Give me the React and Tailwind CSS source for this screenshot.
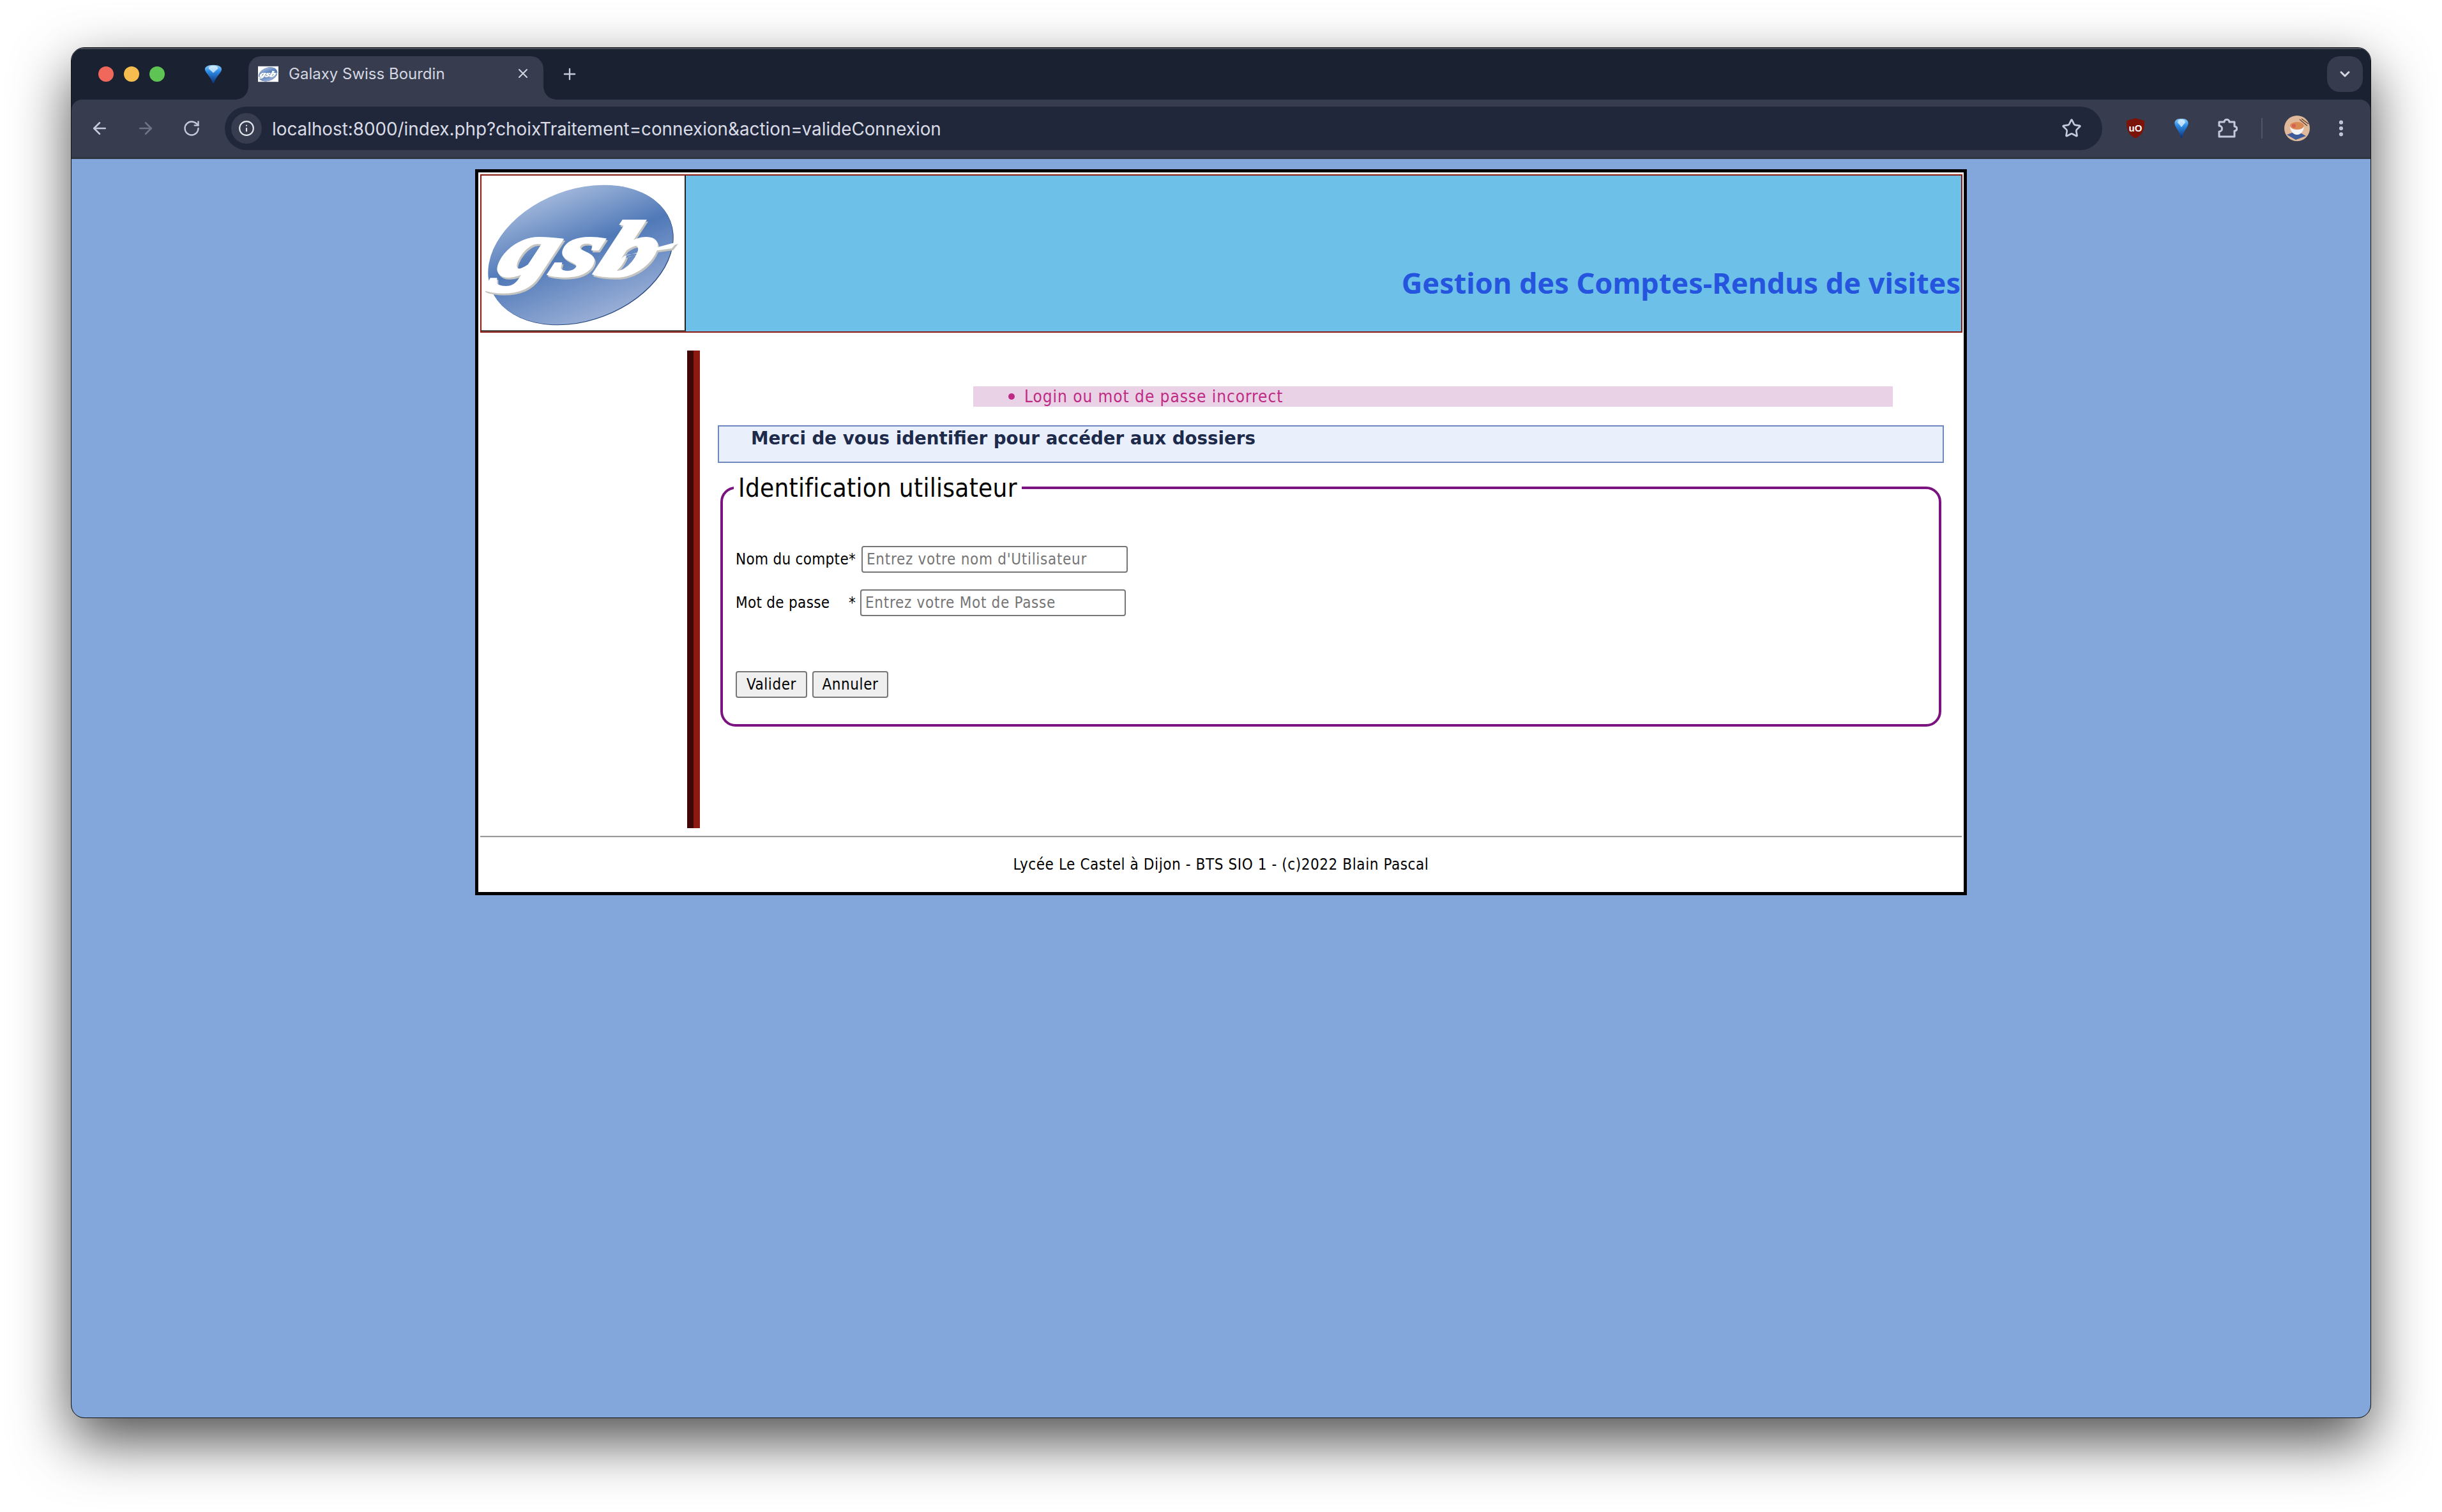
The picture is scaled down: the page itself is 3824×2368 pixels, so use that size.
import React from 'react';
import { ArrowLeft, ArrowRight, ChevronDown, Info, MoreVertical, Plus, RotateCw, Star, X } from 'lucide-react';

function GsbLogo({ className }) {
  return (
    <svg viewBox="0 0 318 242" className={className}>
      <defs>
        <linearGradient id="gsbFill" x1="0" y1="0" x2="0" y2="1">
          <stop offset="0" stopColor="#9db4d9" />
          <stop offset="0.45" stopColor="#5079b8" />
          <stop offset="1" stopColor="#98aed6" />
        </linearGradient>
        <filter id="gsbShadow" x="-10%" y="-10%" width="120%" height="130%">
          <feDropShadow dx="2" dy="3" stdDeviation="0.6" floodColor="#c4c4c0" />
        </filter>
      </defs>
      <rect width="318" height="242" fill="#fff" />
      <ellipse cx="156" cy="125" rx="150" ry="102" transform="rotate(-21 156 125)" fill="#2b4a80" />
      <ellipse cx="155" cy="124" rx="150" ry="102" transform="rotate(-21 155 124)" fill="url(#gsbFill)" />
      <g filter="url(#gsbShadow)" fill="#fff">
        <text
          x="0"
          y="0"
          transform="translate(20 156) skewX(-22) scale(1.42 1)"
          fontFamily="Liberation Serif, serif"
          fontWeight="700"
          fontStyle="italic"
          fontSize="122"
          stroke="#fff"
          strokeWidth="5"
        >
          gsb
        </text>
        <path d="M224 126 L306 104 L298 114 L228 124 C222 140 214 150 200 156 L196 146 Z" />
      </g>
    </svg>
  );
}

function Drop({ className }) {
  return (
    <svg viewBox="0 0 28 54" className={className}>
      <defs>
        <linearGradient id="dropFill" x1="0" y1="0" x2="0" y2="1">
          <stop offset="0" stopColor="#8fd0fb" />
          <stop offset="0.35" stopColor="#2f8de8" />
          <stop offset="1" stopColor="#0a2f78" />
        </linearGradient>
      </defs>
      <path d="M14 1 C23 1 28 7 27 15 C26 24 18 34 15 53 L13 53 C10 34 2 24 1 15 C0 7 5 1 14 1 Z" fill="url(#dropFill)" />
      <path d="M14 3 C19 3 22 7 21 12 L14 24 L7 12 C6 7 9 3 14 3 Z" fill="#e6f4ff" opacity="0.75" />
    </svg>
  );
}

function UblockIcon() {
  return (
    <svg viewBox="0 0 30 32" className="w-[30px] h-[32px]">
      <path d="M15 0 L29 4 C30 16 27 26 15 32 C3 26 0 16 1 4 Z" fill="#7a1408" />
      <text x="15" y="21" textAnchor="middle" fontFamily="Liberation Sans, sans-serif" fontWeight="700" fontSize="15" fill="#fff">
        uO
      </text>
    </svg>
  );
}

function ExtensionIcon() {
  return (
    <svg viewBox="0 0 32 32" className="w-[32px] h-[32px]" fill="none" stroke="#c5c9dc" strokeWidth="3" strokeLinejoin="round">
      <path d="M3 6 H11 C11 1 19 1 19 6 H27 V13 C32 13 32 20 27 20 V29 H3 V21 C9 21 9 12 3 12 Z" />
    </svg>
  );
}

function Avatar() {
  return (
    <svg viewBox="0 0 40 40" className="w-[40px] h-[40px] rounded-full">
      <rect width="40" height="40" fill="#dfb99a" />
      <path d="M4 30 L20 24 L34 32 L18 38 Z" fill="#3d5a9a" />
      <path d="M9 16 H31 C31 24 26 30 20 30 C14 30 9 24 9 16 Z" fill="#f4f4f6" />
      <ellipse cx="20" cy="16" rx="11" ry="6" fill="#d98a52" />
      <circle cx="15" cy="16" r="3" fill="#d85f55" />
      <path d="M24 6 L36 16 M27 5 L38 13" stroke="#5a3b2a" strokeWidth="1.2" />
    </svg>
  );
}

function TabStrip() {
  return (
    <div className="h-[81px] flex pt-[11px] pl-[42px] pr-[12px] border-t-2 border-t-[#4a4f5c] relative">
      <div className="flex items-center gap-[16px] h-[56px]">
        <div className="w-[24px] h-[24px] rounded-full bg-[#f0675c]" />
        <div className="w-[24px] h-[24px] rounded-full bg-[#f5bd4f]" />
        <div className="w-[24px] h-[24px] rounded-full bg-[#5ec454]" />
      </div>
      <div className="w-[131px] h-[56px] flex items-center justify-center pl-[34px] pr-[13px]">
        <Drop className="w-[28px] h-[54px] scale-y-[0.55]" />
      </div>
      <div className="relative w-[462px] h-[68px] bg-[#373d4e] rounded-t-[20px] flex items-start pt-[12px] pl-[15px]">
        <div className="absolute left-[-20px] bottom-0 w-[20px] h-[20px] bg-[radial-gradient(circle_at_0_0,#1a2131_19.5px,#373d4e_20px)]" />
        <div className="absolute right-[-20px] bottom-0 w-[20px] h-[20px] bg-[radial-gradient(circle_at_100%_0,#1a2131_19.5px,#373d4e_20px)]" />
        <GsbLogo className="w-[32px] h-[32px]" />
        <span className="ml-[16px] font-['Inter',sans-serif] text-[24px] leading-[32px] text-[#d4d7e2]">Galaxy Swiss Bourdin</span>
        <X className="absolute right-[20px] top-[15px] text-[#d4d7e2]" size={24} strokeWidth={2} />
      </div>
      <div className="w-[82px] h-[56px] flex items-center justify-center">
        <Plus className="text-[#c5c9dc]" size={28} strokeWidth={2} />
      </div>
      <div className="flex-1" />
      <div className="w-[56px] h-[56px] rounded-[20px] bg-[#363c4d] flex items-center justify-center">
        <ChevronDown className="text-[#d4d7e2]" size={24} strokeWidth={3} />
      </div>
    </div>
  );
}

function ToolBar() {
  return (
    <div className="h-[93px] bg-[#373d4e] rounded-t-[16px] flex items-center border-b-[3px] border-b-[#30343f] relative">
      <div className="w-[8px]" />
      <div className="w-[72px] flex justify-center"><ArrowLeft className="text-[#c5c9dc]" size={30} strokeWidth={2} /></div>
      <div className="w-[72px] flex justify-center"><ArrowRight className="text-[#6f7485]" size={30} strokeWidth={2} /></div>
      <div className="w-[72px] flex justify-center"><RotateCw className="text-[#c5c9dc]" size={28} strokeWidth={2} /></div>
      <div className="ml-[16px] w-[2940px] h-[68px] rounded-full bg-[#20273a] flex items-center pl-[10px] pr-[32px]">
        <div className="w-[48px] h-[48px] rounded-full bg-[#373d4e] flex items-center justify-center">
          <Info className="text-[#e4e6ee]" size={26} strokeWidth={2} />
        </div>
        <span className="ml-[16px] pt-[3px] font-['Inter',sans-serif] text-[27.8px] text-[#d9dce6]">
          localhost:8000/index.php?choixTraitement=connexion&amp;action=valideConnexion
        </span>
        <div className="flex-1" />
        <Star className="text-[#c5c9dc]" size={32} strokeWidth={2} />
      </div>
      <div className="ml-[36px] w-[32px] flex justify-center"><UblockIcon /></div>
      <div className="ml-[40px] w-[32px] flex justify-center"><Drop className="w-[26px] h-[44px] scale-y-[0.72]" /></div>
      <div className="ml-[40px] w-[32px] flex justify-center"><ExtensionIcon /></div>
      <div className="ml-[37px] w-[2px] h-[32px] bg-[#50566a]" />
      <div className="ml-[34px]"><Avatar /></div>
      <MoreVertical className="ml-[33px] text-[#c5c9dc]" size={32} strokeWidth={2.6} />
    </div>
  );
}

function LoginForm() {
  return (
    <fieldset className="ml-[32px] w-[1912px] border-[4px] border-[#7a1380] rounded-[24px] mt-[16px] h-[397px]">
      <legend className="ml-[17px] px-[7px] text-[40px] leading-[46px] tracking-[0.3px] text-black">Identification utilisateur</legend>
      <div className="pl-[20px]">
        <div className="mt-[68px] flex items-center h-[42px] text-[24px] tracking-[0.3px]">
          <label className="w-[197px]">Nom du compte*</label>
          <input
            placeholder="Entrez votre nom d'Utilisateur"
            className="w-[417px] h-[42px] border-2 border-[#767676] rounded-[4px] px-[6px] text-[24px] tracking-[0.7px] placeholder:text-[#757575]"
          />
        </div>
        <div className="mt-[26px] flex items-center h-[42px] text-[24px] tracking-[0.3px]">
          <label className="w-[195px] flex justify-between pr-[7px]">
            <span>Mot de passe</span>
            <span>*</span>
          </label>
          <input
            placeholder="Entrez votre Mot de Passe"
            className="w-[416px] h-[42px] border-2 border-[#767676] rounded-[4px] px-[6px] text-[24px] tracking-[0.7px] placeholder:text-[#757575]"
          />
        </div>
        <div className="mt-[86px] flex gap-[8px] tracking-[0.6px]">
          <button className="w-[112px] h-[42px] bg-[#efefef] border-2 border-[#767676] rounded-[4px] text-[24px]">Valider</button>
          <button className="w-[119px] h-[42px] bg-[#efefef] border-2 border-[#767676] rounded-[4px] text-[24px]">Annuler</button>
        </div>
      </div>
    </fieldset>
  );
}

function Page() {
  return (
    <div className="flex-1 bg-[#83a7db] pt-[16px] font-['DejaVu_Sans_Condensed','DejaVu_Sans',sans-serif] text-black">
      <div className="ml-[632px] w-[2336px] h-[1137px] border-[5px] border-black bg-white pt-[3px]">
        <div className="mx-[3px] w-[2321px] h-[248px] border-2 border-[#8b1a10] flex">
          <div className="w-[320px] h-[244px] border-r-2 border-r-[#222] border-b-2 border-b-[#555] bg-white">
            <GsbLogo className="w-[318px] h-[242px]" />
          </div>
          <div className="flex-1 bg-[#6dc0e8] flex items-end justify-end pr-[1px] pb-[44px]">
            <h1 className="font-['Noto_Sans',sans-serif] font-bold text-[45px] leading-[64px] text-[#2554de]">
              Gestion des Comptes-Rendus de visites
            </h1>
          </div>
        </div>
        <div className="flex mt-[28px] h-[748px]">
          <div className="w-[327px]" />
          <div className="w-[20px] flex">
            <div className="w-[10px] bg-[#3e0604]" />
            <div className="w-[10px] bg-[#8b1a10]" />
          </div>
          <div className="flex-1">
            <div className="ml-[428px] mt-[56px] w-[1440px] h-[32px] bg-[#e9d2e5] text-[#bf2a84] text-[26px] leading-[32px] tracking-[0.95px] pl-[55px] flex items-center">
              <span className="w-[10px] h-[10px] rounded-full bg-[#bf2a84]" />
              <span className="ml-[15px]">Login ou mot de passe incorrect</span>
            </div>
            <div className="ml-[28px] mt-[29px] w-[1920px] h-[59px] bg-[#e9effb] border-2 border-[#6f89c0] pl-[50px] pt-[2px] font-['DejaVu_Sans',sans-serif] font-bold text-[27.7px] leading-[34px] text-[#1d2a4a]">
              Merci de vous identifier pour accéder aux dossiers
            </div>
            <LoginForm />
          </div>
        </div>
        <div className="mt-[12px] mx-[3px] h-[3px] bg-[#999] border-b border-b-[#eee]" />
        <p className="mt-[28px] text-center text-[24px] leading-[28px] tracking-[0.58px]">Lycée Le Castel à Dijon - BTS SIO 1 - (c)2022 Blain Pascal</p>
      </div>
    </div>
  );
}

export default function App() {
  return (
    <div className="w-[3824px] h-[2368px] bg-white pt-[75px] pl-[112px] overflow-hidden">
      <div className="w-[3600px] h-[2145px] rounded-[20px] overflow-hidden bg-[#1a2131] flex flex-col shadow-[0_36px_90px_rgba(0,0,0,0.7)] outline-1 outline-[#111]">
        <TabStrip />
        <ToolBar />
        <Page />
      </div>
    </div>
  );
}
